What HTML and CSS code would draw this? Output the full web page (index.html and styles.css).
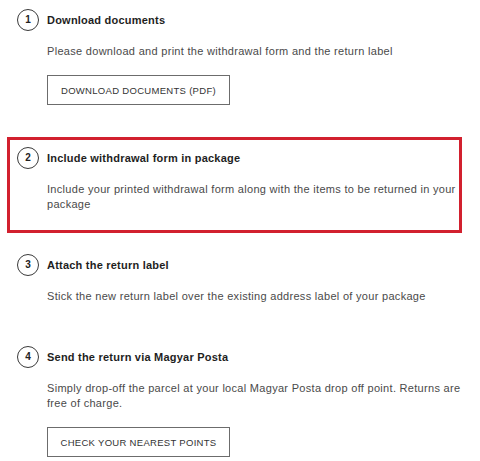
FILE: index.html
```html
<!DOCTYPE html>
<html lang="en">
<head>
<meta charset="utf-8">
<title>Return steps</title>
<link rel="stylesheet" href="styles.css">
</head>
<body>
<ol class="steps">
  <li class="step">
    <div class="step-head"><span class="num">1</span><h3 class="title">Download documents</h3></div>
    <div class="step-body">
      <p class="text">Please download and print the withdrawal form and the return label</p>
      <a class="btn" href="#">DOWNLOAD DOCUMENTS (PDF)</a>
    </div>
  </li>
  <li class="step highlight">
    <div class="step-head"><span class="num">2</span><h3 class="title">Include withdrawal form in package</h3></div>
    <div class="step-body">
      <p class="text">Include your printed withdrawal form along with the items to be returned in your package</p>
    </div>
  </li>
  <li class="step">
    <div class="step-head"><span class="num">3</span><h3 class="title">Attach the return label</h3></div>
    <div class="step-body">
      <p class="text">Stick the new return label over the existing address label of your package</p>
    </div>
  </li>
  <li class="step">
    <div class="step-head"><span class="num">4</span><h3 class="title">Send the return via Magyar Posta</h3></div>
    <div class="step-body">
      <p class="text">Simply drop-off the parcel at your local Magyar Posta drop off point. Returns are free of charge.</p>
      <a class="btn" href="#">CHECK YOUR NEAREST POINTS</a>
    </div>
  </li>
</ol>
</body>
</html>
```
FILE: styles.css
```css
html, body {
  margin: 0;
  padding: 0;
  background: #fff;
}
body {
  font-family: "Liberation Sans", Arial, sans-serif;
  color: #444;
}
.steps {
  list-style: none;
  margin: 0 18px 0 8px;
  padding: 0;
  display: flex;
  flex-direction: column;
  gap: 12px;
}
.step {
  position: relative;
  padding: 9px 0 21px 9px;
}
.step.highlight::after {
  content: "";
  position: absolute;
  top: -1px;
  left: -1px;
  right: 0;
  bottom: 0;
  border: 3px solid #d2202e;
  pointer-events: none;
}
.step-head {
  display: flex;
  align-items: center;
  gap: 8px;
  height: 22px;
}
.num {
  box-sizing: border-box;
  width: 22px;
  height: 22px;
  flex: none;
  border: 1px solid #3a3a3a;
  border-radius: 50%;
  display: flex;
  align-items: center;
  justify-content: center;
  font-size: 10px;
  font-weight: bold;
  color: #222;
  line-height: 1;
}
.title {
  margin: 0;
  font-size: 11px;
  font-weight: bold;
  letter-spacing: 0.22px;
  color: #1e1e1e;
}
.step-body {
  padding-left: 30px;
}
.text {
  margin: 13px 0 0;
  font-size: 11px;
  line-height: 15px;
  letter-spacing: 0.3px;
  color: #4a4a4a;
}
.btn {
  box-sizing: border-box;
  display: inline-flex;
  align-items: center;
  justify-content: center;
  width: 183px;
  height: 30px;
  margin-top: 16px;
  padding: 0;
  border: 1px solid #6c6c6c;
  font-size: 9.5px;
  letter-spacing: 0.3px;
  color: #333;
  text-decoration: none;
}
```
